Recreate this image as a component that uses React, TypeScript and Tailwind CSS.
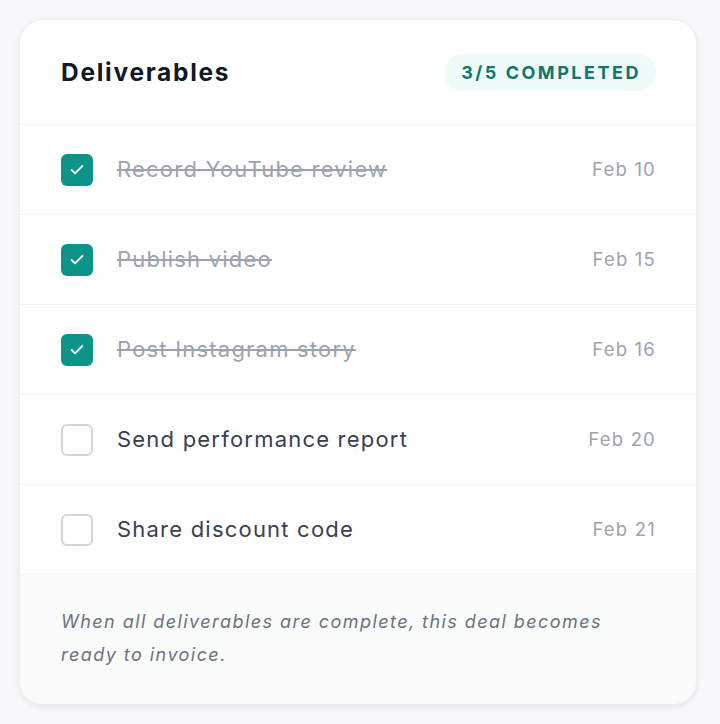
import { Check } from "lucide-react";

type Item = { id: number; label: string; date: string; done: boolean };

const ITEMS: Item[] = [
  { id: 1, label: "Record YouTube review", date: "Feb 10", done: true },
  { id: 2, label: "Publish video", date: "Feb 15", done: true },
  { id: 3, label: "Post Instagram story", date: "Feb 16", done: true },
  { id: 4, label: "Send performance report", date: "Feb 20", done: false },
  { id: 5, label: "Share discount code", date: "Feb 21", done: false },
];

export default function App() {
  const completed = ITEMS.filter(i => i.done).length;

  return (
    <div className="min-h-screen bg-[#f7f8fa] pl-[19px] pr-[23px] pt-[19px] pb-5 font-['Inter',sans-serif]">
      <div className="bg-white border border-[#eceef1] rounded-[24px] shadow-[0_2px_6px_rgba(15,23,42,0.08)] overflow-hidden">
        {/* Header */}
        <div className="flex items-center justify-between pl-[41px] pr-10 pt-[34px] pb-[33px] border-b border-[#f2f3f5]">
          <h2 className="text-[24.5px] font-bold text-[#111827] tracking-[0.07em] leading-none">Deliverables</h2>
          <span className="h-[37px] flex items-center bg-[#effbf8] text-[#0f766e] text-[18px] font-bold tracking-[0.14em] uppercase pl-[17px] pr-[15px] rounded-full leading-none">
            {completed}/{ITEMS.length} Completed
          </span>
        </div>

        {/* Rows */}
        <ul>
          {ITEMS.map(item => (
            <li key={item.id} className="flex items-center justify-between pl-[41px] pr-10 h-[90px] border-b border-[#f2f3f5]">
              <div className="flex items-center gap-6">
                {item.done ? (
                  <span className="w-8 h-8 rounded-[6px] bg-[#0d9488] flex items-center justify-center">
                    <Check className="w-4 h-4 text-white" strokeWidth={2.75} />
                  </span>
                ) : (
                  <span className="w-8 h-8 rounded-[6px] border-2 border-[#d1d5db] bg-white" />
                )}
                <span className={`text-[22px] tracking-[0.055em] ${item.done ? "text-[#9ca3af] line-through" : "text-[#374151]"}`}>
                  {item.label}
                </span>
              </div>
              <span className="text-[18.5px] tracking-[0.065em] text-[#9ca3af]">{item.date}</span>
            </li>
          ))}
        </ul>

        {/* Footer */}
        <div className="bg-[#fafbfb] pl-[41px] pr-10 pt-[30px] pb-[33px]">
          <p className="text-[18px] italic text-[#6b7280] tracking-[0.08em] leading-[33px]">
            When all deliverables are complete, this deal becomes ready to invoice.
          </p>
        </div>
      </div>
    </div>
  );
}
